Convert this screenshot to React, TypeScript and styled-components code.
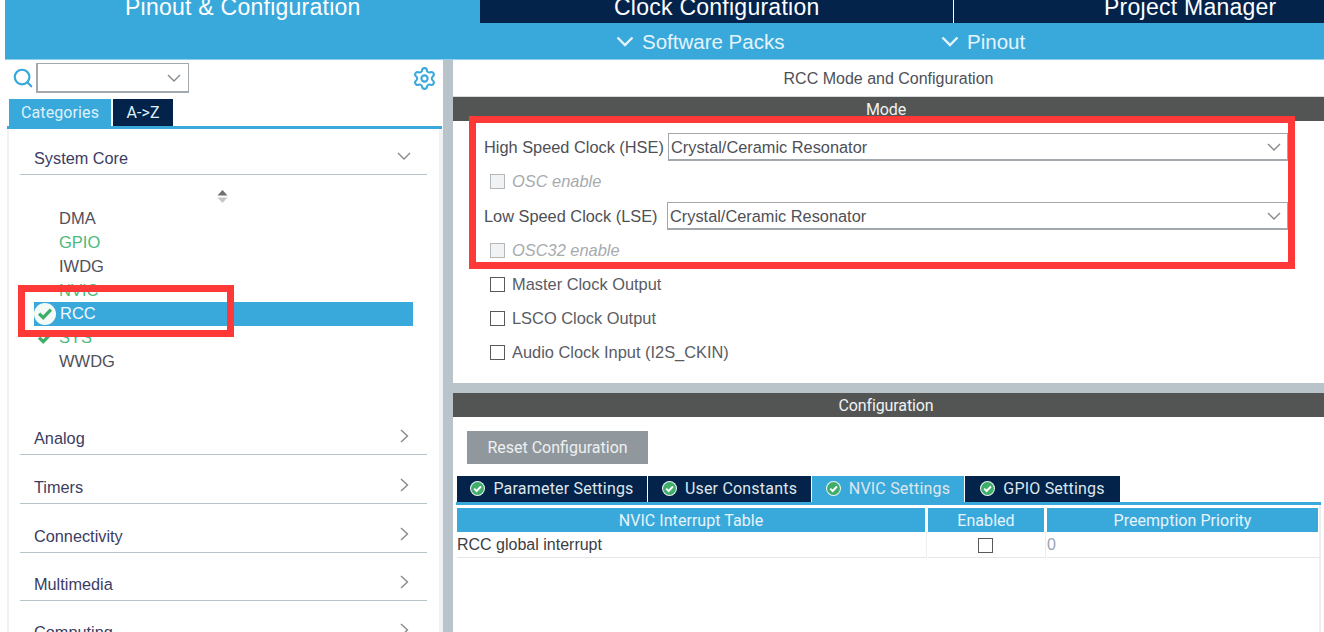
import styled, { createGlobalStyle } from "styled-components";
import { Search, Settings } from "lucide-react";

const GlobalStyle = createGlobalStyle`
  html, body {
    margin: 0;
    padding: 0;
    background: #fff;
    overflow: hidden;
    font-family: "Liberation Sans", Arial, sans-serif;
  }
`;

const BLUE = "#39a9dc";
const NAVY = "#03234b";
const ROBOTO = `"Roboto", "Liberation Sans", sans-serif`;

const Page = styled.div`
  width: 1324px;
  height: 632px;
  position: relative;
  overflow: hidden;
  background: #fff;
  padding-left: 5px;
  box-sizing: border-box;
`;

const MainTabs = styled.div`
  height: 23px;
  display: grid;
  grid-template-columns: 475px 474px 1fr;
  background: ${NAVY};
  overflow: hidden;
`;

const MainTab = styled.div<{ $active?: boolean; $x: number; $line?: boolean }>`
  background: ${({ $active }) => ($active ? BLUE : NAVY)};
  border-right: ${({ $line }) => ($line ? "1px solid #fff" : "none")};
  color: #fff;
  font-size: 23px;
  letter-spacing: 0.25px;
  line-height: 20px;
  height: 28px;
  margin-top: -3px;
  padding-left: ${({ $x }) => $x}px;
  white-space: nowrap;
`;

const SubBar = styled.div`
  height: 37px;
  background: ${BLUE};
  border-bottom: 1px solid #8fd0ee;
  box-sizing: border-box;
  display: flex;
  color: #e6f4fb;
  font-size: 20.5px;
  padding-top: 1px;
`;

const SubItem = styled.div<{ $w: number; $pad: number }>`
  width: ${({ $w }) => $w}px;
  padding-left: ${({ $pad }) => $pad}px;
  box-sizing: border-box;
  display: flex;
  align-items: center;
  gap: 8px;
`;

const Body = styled.div`
  display: flex;
  height: 572px;
`;

const Sidebar = styled.div`
  width: 438px;
  flex: none;
  display: flex;
  flex-direction: column;
`;

const SearchRow = styled.div`
  height: 39px;
  flex: none;
  box-sizing: border-box;
  display: flex;
  align-items: center;
  padding: 3px 6px 6px 7px;
  color: ${BLUE};
`;

const SearchBox = styled.div`
  width: 153px;
  height: 30px;
  border: 1px solid #a3a8ad;
  border-width: 1px 1px 2px 2px;
  box-sizing: border-box;
  margin-left: 2px;
  display: flex;
  align-items: center;
  justify-content: flex-end;
  padding-right: 7px;
`;

const Spacer = styled.div`
  flex: 1;
`;

const SideTabs = styled.div`
  display: flex;
  flex: none;
  height: 27px;
  margin-left: 2px;
  padding-left: 2px;
  gap: 2px;
  border-bottom: 3px solid ${BLUE};
  width: 433px;
`;

const SideTab = styled.div<{ $active?: boolean }>`
  height: 27px;
  display: flex;
  align-items: center;
  justify-content: center;
  width: ${({ $active }) => ($active ? "102px" : "60px")};
  background: ${({ $active }) => ($active ? BLUE : NAVY)};
  color: #dff1fa;
  font-family: ${ROBOTO};
  font-size: 16px;
  letter-spacing: 0.1px;
`;

const CategoryPanel = styled.div`
  flex: 1;
  margin-left: 2px;
  width: 436px;
  border-left: 2px solid #f0f1f2;
  border-right: 4px solid #f0f1f2;
  box-sizing: border-box;
  padding: 0 12px 0 11px;
  overflow: hidden;
`;

const CategoryHeader = styled.div<{ $h: number }>`
  height: ${({ $h }) => $h}px;
  border-bottom: 1px solid #b9c4ca;
  box-sizing: border-box;
  display: flex;
  align-items: flex-end;
  justify-content: space-between;
  color: #3b3c63;
  font-size: 16.3px;
  padding: 0 16px 6px 14px;
  line-height: 19px;
`;

const HeaderIcon = styled.span`
  width: 14px;
  height: 14px;
  display: flex;
  align-items: center;
  justify-content: center;
  margin-bottom: 5px;
`;

const SortArrows = styled.div`
  height: 31.5px;
  display: flex;
  align-items: center;
  justify-content: center;
  padding: 11px 3px 0 0;
  box-sizing: border-box;
`;

const PeripheralList = styled.div`
  display: flex;
  flex-direction: column;
`;

const Peripheral = styled.div<{ $ok?: boolean; $selected?: boolean }>`
  height: 23.86px;
  display: flex;
  align-items: center;
  position: relative;
  width: 379px;
  margin-left: 14px;
  padding-left: ${({ $selected }) => ($selected ? "26px" : "25px")};
  box-sizing: border-box;
  font-size: 16.5px;
  color: ${({ $ok, $selected }) =>
    $selected ? "#f0f9fd" : $ok ? "#4cb97b" : "#514f5a"};
  background: ${({ $selected }) => ($selected ? BLUE : "transparent")};
`;

const CheckBadge = styled.svg`
  position: absolute;
  left: 0;
  top: 1px;
`;

const RedBox = styled.div`
  position: absolute;
  border: 7px solid #ff3838;
  box-sizing: border-box;
  pointer-events: none;
`;

const Content = styled.div`
  flex: 1;
  border-left: 10px solid #b9c4ca;
  display: flex;
  flex-direction: column;
  min-width: 0;
`;

const ModeTitle = styled.div`
  height: 37px;
  flex: none;
  display: flex;
  align-items: center;
  justify-content: center;
  padding-top: 1px;
  font-size: 16px;
  color: #4e5057;
  border-bottom: 1px solid #d8dcde;
  box-sizing: border-box;
`;

const DarkBar = styled.div`
  height: 24px;
  box-sizing: border-box;
  padding-right: 5px;
  background: #535554;
  color: #f0f2f2;
  font-family: ${ROBOTO};
  font-size: 16px;
  letter-spacing: -0.1px;
  display: flex;
  align-items: center;
  justify-content: center;
  flex: none;
`;

const ModePanel = styled.div`
  height: 262px;
  flex: none;
  background: #fff;
  padding: 12px 36px 0 31px;
  box-sizing: border-box;
`;

const ClockRow = styled.div<{ $top?: number }>`
  height: 28px;
  margin-top: ${({ $top }) => $top ?? 0}px;
  margin-bottom: 3px;
  display: flex;
  align-items: center;
  font-size: 16.35px;
  color: #4e5057;
`;

const ClockLabel = styled.span<{ $w: number }>`
  width: ${({ $w }) => $w}px;
  flex: none;
  white-space: nowrap;
`;

const ClockSelect = styled.div`
  flex: 1;
  height: 28px;
  border: 1px solid #a3a8ad;
  border-bottom-width: 2px;
  box-sizing: border-box;
  display: flex;
  align-items: center;
  justify-content: space-between;
  padding: 1px 6px 0 2px;
  color: #4e5057;
`;

const CheckRow = styled.div<{ $disabled?: boolean }>`
  height: 34px;
  padding-left: 6px;
  display: flex;
  align-items: center;
  gap: 7px;
  font-size: 16.4px;
  font-style: ${({ $disabled }) => ($disabled ? "italic" : "normal")};
  color: ${({ $disabled }) => ($disabled ? "#a7abae" : "#5a5c63")};
`;

const CheckBox = styled.span<{ $disabled?: boolean }>`
  width: 15px;
  height: 15px;
  flex: none;
  box-sizing: border-box;
  border: 1px solid ${({ $disabled }) => ($disabled ? "#b4b8bb" : "#58595b")};
  background: ${({ $disabled }) => ($disabled ? "#f1f2f3" : "#fff")};
`;

const Gutter = styled.div`
  height: 10px;
  flex: none;
  background: #b9c4ca;
`;

const ConfigPanel = styled.div`
  flex: 1;
  padding: 14px 3px 0 3px;
  min-height: 0;
  display: flex;
  flex-direction: column;
`;

const ResetButton = styled.div`
  width: 181px;
  height: 33px;
  flex: none;
  margin-left: 11px;
  background: #90989e;
  color: #eef0f1;
  font-family: ${ROBOTO};
  font-size: 16px;
  display: flex;
  align-items: center;
  justify-content: center;
`;

const ConfigTabs = styled.div`
  display: flex;
  flex: none;
  margin-top: 12px;
  height: 29px;
  box-sizing: border-box;
  border-bottom: 3px solid ${BLUE};
  padding-left: 1px;
  gap: 1px;
`;

const ConfigTab = styled.div<{ $active?: boolean; $w: number }>`
  width: ${({ $w }) => $w}px;
  height: 26px;
  box-sizing: border-box;
  padding-bottom: 1px;
  background: ${({ $active }) => ($active ? BLUE : NAVY)};
  color: #dfe6ec;
  font-family: ${ROBOTO};
  font-size: 16px;
  letter-spacing: 0.2px;
  display: flex;
  align-items: center;
  justify-content: center;
  gap: 8px;
`;

const TableFrame = styled.div`
  flex: 1;
  border-right: 2px solid #eceef0;
  padding: 3px 0 0 1px;
`;

const TableGrid = styled.div`
  display: grid;
  grid-template-columns: 468px 116px 271px;
  gap: 0 3px;
`;

const TableHead = styled.div`
  height: 24px;
  background: ${BLUE};
  color: #e6f4fb;
  font-family: ${ROBOTO};
  font-size: 16px;
  letter-spacing: 0.05px;
  display: flex;
  align-items: center;
  justify-content: center;
`;

const TableCell = styled.div<{ $center?: boolean; $muted?: boolean }>`
  height: 26px;
  border-bottom: 1px solid #e4e7e9;
  border-right: 1px solid #eceef0;
  margin-right: -2px;
  padding: 1px ${({ $center }) => ($center ? "2px" : "0")} 0 0;
  box-sizing: border-box;
  display: flex;
  align-items: center;
  justify-content: ${({ $center }) => ($center ? "center" : "flex-start")};
  font-size: 16px;
  color: ${({ $muted }) => ($muted ? "#9aa3b5" : "#3d3d42")};
`;

const TableCheck = styled.span`
  width: 15px;
  height: 15px;
  box-sizing: border-box;
  border: 1px solid #58595b;
`;

// thick chevron from the blue sub bar
const BarChevron = () => (
  <svg width="18" height="11" viewBox="0 0 18 11" style={{ flex: "none" }}>
    <path d="M1.5 1.5 9 9 16.5 1.5" fill="none" stroke="#e6f4fb" strokeWidth="2.4" />
  </svg>
);

const ThinDown = () => (
  <svg width="14" height="8" viewBox="0 0 14 8" style={{ flex: "none" }}>
    <path d="M1 1 7 7 13 1" fill="none" stroke="#85898d" strokeWidth="1.4" />
  </svg>
);

const ThinRight = () => (
  <svg width="9" height="14" viewBox="0 0 9 14" style={{ flex: "none" }}>
    <path d="M1 1 7.5 7 1 13" fill="none" stroke="#85898d" strokeWidth="1.4" />
  </svg>
);

const Check = () => (
  <svg width="15" height="15" viewBox="0 0 20 20" style={{ flex: "none" }}>
    <circle cx="10" cy="10" r="10" fill="#e8f5ee" />
    <circle cx="10" cy="10" r="8.6" fill="#3fae6a" />
    <path d="M5.6 10.2 8.8 13.4 14.6 7.4" fill="none" stroke="#fff" strokeWidth="2.6" />
  </svg>
);

const systemCore = [
  { name: "DMA" },
  { name: "GPIO", ok: true },
  { name: "IWDG" },
  { name: "NVIC", ok: true },
  { name: "RCC", selected: true, badge: true },
  { name: "SYS", ok: true, badge: true },
  { name: "WWDG" },
];

const categories = [
  { name: "Analog", h: 81.5 },
  { name: "Timers", h: 49 },
  { name: "Connectivity", h: 49 },
  { name: "Multimedia", h: 48 },
  { name: "Computing", h: 48 },
];

export default function App() {
  return (
    <Page>
      <GlobalStyle />
      <MainTabs>
        <MainTab $active $x={120}>Pinout &amp; Configuration</MainTab>
        <MainTab $x={134} $line>Clock Configuration</MainTab>
        <MainTab $x={150}>Project Manager</MainTab>
      </MainTabs>
      <SubBar>
        <SubItem $w={936} $pad={611}>
          <BarChevron />
          Software Packs
        </SubItem>
        <SubItem $w={300} $pad={0}>
          <BarChevron />
          Pinout
        </SubItem>
      </SubBar>
      <Body>
        <Sidebar>
          <SearchRow>
            <Search size={22} strokeWidth={2.4} />
            <SearchBox>
              <ThinDown />
            </SearchBox>
            <Spacer />
            <Settings size={25} strokeWidth={2} />
          </SearchRow>
          <SideTabs>
            <SideTab $active>Categories</SideTab>
            <SideTab>A-&gt;Z</SideTab>
          </SideTabs>
          <CategoryPanel>
            <CategoryHeader $h={46}>
              System Core
              <HeaderIcon>
                <ThinDown />
              </HeaderIcon>
            </CategoryHeader>
            <SortArrows>
              <svg width="11" height="13" viewBox="0 0 11 13">
                <path d="M5.5 0 10.5 5.5H.5Z" fill="#6e7072" />
                <path d="M5.5 13 10.5 7.5H.5Z" fill="#c4c6c8" />
              </svg>
            </SortArrows>
            <PeripheralList>
              {systemCore.map((p) => (
                <Peripheral key={p.name} $ok={p.ok} $selected={p.selected}>
                  {p.badge && (
                    <CheckBadge width="22" height="22" viewBox="0 0 20 20">
                      <circle cx="10" cy="10" r="10" fill={p.selected ? "#f4fbf7" : "none"} />
                      <path d="M4.6 9.6 8.4 13.4 15.4 6" fill="none" stroke="#3fae6a" strokeWidth="3" />
                    </CheckBadge>
                  )}
                  {p.name}
                </Peripheral>
              ))}
            </PeripheralList>
            {categories.map((c) => (
              <CategoryHeader key={c.name} $h={c.h}>
                {c.name}
                <HeaderIcon>
                  <ThinRight />
                </HeaderIcon>
              </CategoryHeader>
            ))}
          </CategoryPanel>
        </Sidebar>
        <Content>
          <ModeTitle>RCC Mode and Configuration</ModeTitle>
          <DarkBar>Mode</DarkBar>
          <ModePanel>
            <ClockRow>
              <ClockLabel $w={184}>High Speed Clock (HSE)</ClockLabel>
              <ClockSelect>
                Crystal/Ceramic Resonator
                <ThinDown />
              </ClockSelect>
            </ClockRow>
            <CheckRow $disabled>
              <CheckBox $disabled />
              OSC enable
            </CheckRow>
            <ClockRow $top={4}>
              <ClockLabel $w={183}>Low Speed Clock (LSE)</ClockLabel>
              <ClockSelect>
                Crystal/Ceramic Resonator
                <ThinDown />
              </ClockSelect>
            </ClockRow>
            <CheckRow $disabled>
              <CheckBox $disabled />
              OSC32 enable
            </CheckRow>
            <CheckRow>
              <CheckBox />
              Master Clock Output
            </CheckRow>
            <CheckRow>
              <CheckBox />
              LSCO Clock Output
            </CheckRow>
            <CheckRow>
              <CheckBox />
              Audio Clock Input (I2S_CKIN)
            </CheckRow>
          </ModePanel>
          <Gutter />
          <DarkBar>Configuration</DarkBar>
          <ConfigPanel>
            <ResetButton>Reset Configuration</ResetButton>
            <ConfigTabs>
              <ConfigTab $w={190}><Check />Parameter Settings</ConfigTab>
              <ConfigTab $w={163}><Check />User Constants</ConfigTab>
              <ConfigTab $active $w={152}><Check />NVIC Settings</ConfigTab>
              <ConfigTab $w={155}><Check />GPIO Settings</ConfigTab>
            </ConfigTabs>
            <TableFrame>
              <TableGrid>
                <TableHead>NVIC Interrupt Table</TableHead>
                <TableHead>Enabled</TableHead>
                <TableHead>Preemption Priority</TableHead>
                <TableCell>RCC global interrupt</TableCell>
                <TableCell $center><TableCheck /></TableCell>
                <TableCell $muted>0</TableCell>
              </TableGrid>
            </TableFrame>
          </ConfigPanel>
        </Content>
      </Body>
      <RedBox style={{ left: 18, top: 285, width: 216, height: 52 }} />
      <RedBox style={{ left: 469, top: 116, width: 826, height: 153 }} />
    </Page>
  );
}
